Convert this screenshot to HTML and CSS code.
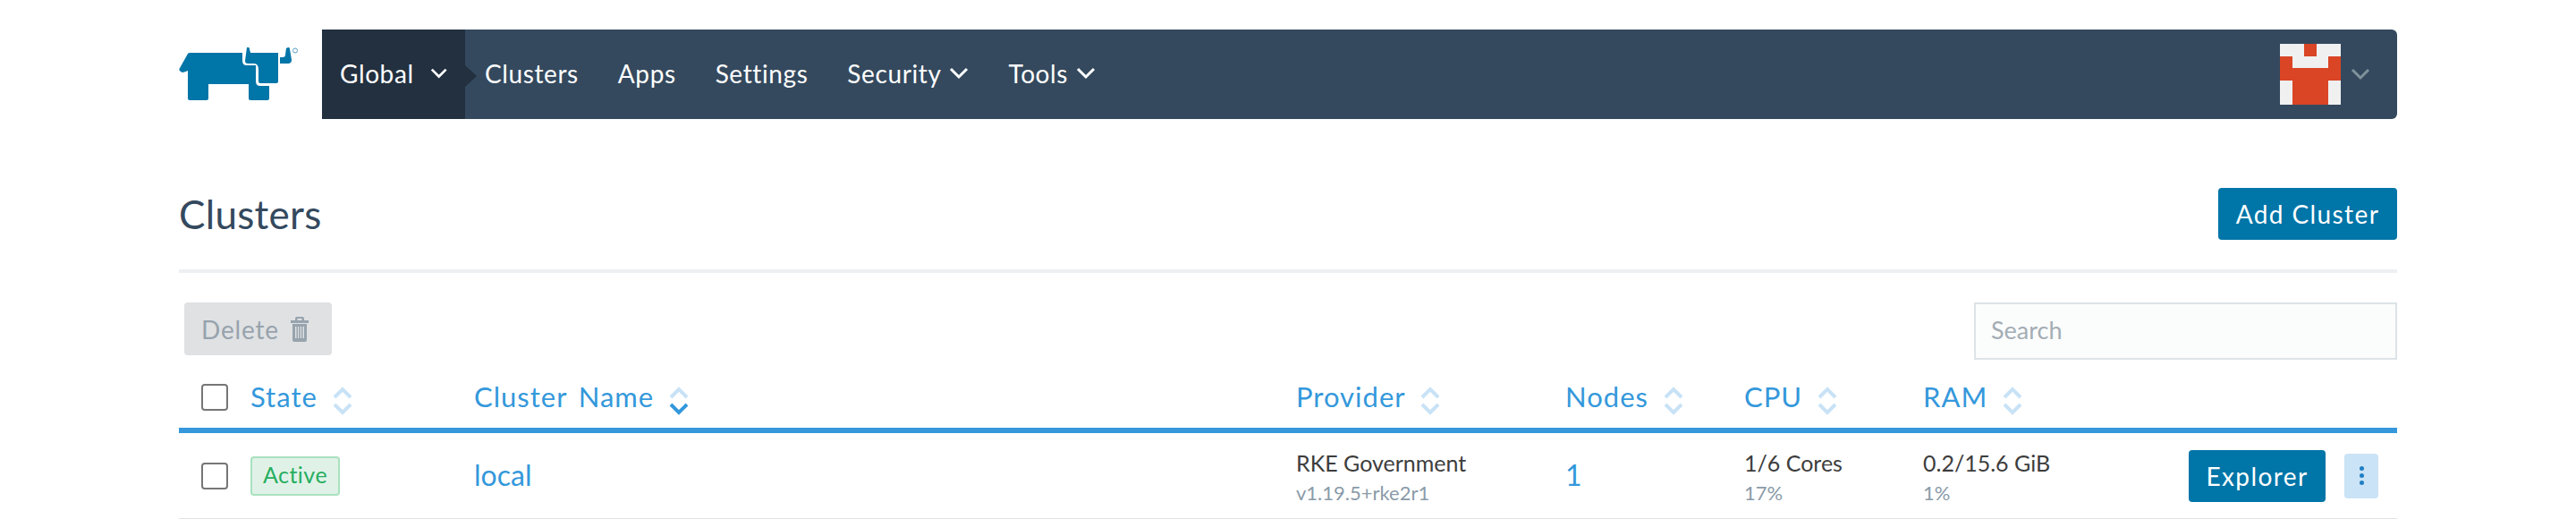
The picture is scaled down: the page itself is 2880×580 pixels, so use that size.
FILE: index.html
```html
<!DOCTYPE html>
<html lang="en">
<head>
  <meta charset="UTF-8" />
  <title>Rancher - Clusters</title>
  <link rel="stylesheet" href="styles.css">
</head>
<body>
  <header class="top">
    <svg class="logo" viewBox="0 0 134 60" width="134" height="60">
      <path fill="#0075a8" d="M12 6H71V15Q71 20 76 20H86V38Q86 43 91 43H101V57Q101 59 99 59H80Q78 59 78 57V41H33V57Q33 59 31 59H12Q10 59 10 57V27Q10 25 8 27L4 28Q-1 26 1 23L10 7Q11 6 12 6Z"/>
      <path fill="#0075a8" d="M76 0H78Q79 0 79 2L80 6H111V38Q111 40 108 40H91Q89 40 89 38V25Q89 18 84 18H77Q74 18 74 15Z"/>
      <path fill="#0075a8" d="M120 1Q121 0 123 0Q124 0 124 2L126 14Q126 18 122 18H113V11H116Q119 11 119 8Z"/>
      <circle cx="130" cy="3.500" r="2.500" fill="none" stroke="#5a9fc4" stroke-width="1"/>
    </svg>
    <nav class="navbar">
      <ul class="menu">
        <li class="menu-item active">Global <svg class="chev" viewBox="0 0 22 14"><path d="M2 2l9 9 9-9"/></svg></li>
        <li class="menu-item">Clusters</li>
        <li class="menu-item">Apps</li>
        <li class="menu-item">Settings</li>
        <li class="menu-item">Security <svg class="chev" viewBox="0 0 22 14"><path d="M2 2l9 9 9-9"/></svg></li>
        <li class="menu-item">Tools <svg class="chev" viewBox="0 0 22 14"><path d="M2 2l9 9 9-9"/></svg></li>
      </ul>
      <div class="user">
        <svg class="avatar" viewBox="0 0 5 5" width="68" height="68" shape-rendering="crispEdges">
          <rect width="5" height="5" fill="#f0f0f0"/>
          <path fill="#d94525" d="M2 0h1v1H2zM0 1h1v1h3V1h1v2H4v2H1V3H0z"/>
        </svg>
        <svg class="chev chev-user" viewBox="0 0 22 14"><path d="M2 2l9 9 9-9"/></svg>
      </div>
    </nav>
  </header>

  <section class="page-head">
    <h1>Clusters</h1>
    <button class="btn btn-primary btn-add">Add Cluster</button>
  </section>

  <section class="toolbar">
    <button class="btn btn-disabled">Delete
      <svg class="trash" viewBox="0 0 20 28" width="20" height="28">
        <path fill="#97a3ad" d="M7 0h6q2 0 2 2v2h5v3H0V4h5V2q0-2 2-2zM7.500 2v2h5V2z"/>
        <path fill="#97a3ad" fill-rule="evenodd" d="M2 8h16v18q0 2-2 2H4q-2 0-2-2zM5 11v13h1.500V11zM8 11v13h1.200V11zM10.800 11v13H12V11zM13.500 11v13H15V11z"/>
      </svg>
    </button>
    <input class="search" type="text" placeholder="Search">
  </section>

  <table class="grid">
    <colgroup>
      <col class="c-check"><col class="c-state"><col class="c-name"><col class="c-prov"><col class="c-nodes"><col class="c-cpu"><col class="c-ram"><col>
    </colgroup>
    <thead>
      <tr>
        <th class="check"><span class="box"></span></th>
        <th>State <svg class="sort" viewBox="0 0 22 32"><path d="M2 12l9-9 9 9"/><path d="M2 20l9 9 9-9"/></svg></th>
        <th>Cluster Name <svg class="sort sorted" viewBox="0 0 22 32"><path d="M2 12l9-9 9 9"/><path class="on" d="M2 20l9 9 9-9"/></svg></th>
        <th>Provider <svg class="sort" viewBox="0 0 22 32"><path d="M2 12l9-9 9 9"/><path d="M2 20l9 9 9-9"/></svg></th>
        <th>Nodes <svg class="sort" viewBox="0 0 22 32"><path d="M2 12l9-9 9 9"/><path d="M2 20l9 9 9-9"/></svg></th>
        <th>CPU <svg class="sort" viewBox="0 0 22 32"><path d="M2 12l9-9 9 9"/><path d="M2 20l9 9 9-9"/></svg></th>
        <th>RAM <svg class="sort" viewBox="0 0 22 32"><path d="M2 12l9-9 9 9"/><path d="M2 20l9 9 9-9"/></svg></th>
        <th></th>
      </tr>
    </thead>
    <tbody>
      <tr>
        <td class="check"><span class="box"></span></td>
        <td><span class="badge">Active</span></td>
        <td class="link">local</td>
        <td><div class="main">RKE Government</div><div class="sub">v1.19.5+rke2r1</div></td>
        <td class="link">1</td>
        <td><div class="main">1/6 Cores</div><div class="sub">17%</div></td>
        <td><div class="main">0.2/15.6 GiB</div><div class="sub">1%</div></td>
        <td>
          <div class="actions">
            <button class="btn btn-primary btn-explorer">Explorer</button>
            <button class="btn btn-more"><span class="dot"></span><span class="dot"></span><span class="dot"></span></button>
          </div>
        </td>
      </tr>
    </tbody>
  </table>
</body>
</html>
```

FILE: styles.css
```css
* {
  box-sizing: border-box;
}
body {
  margin: 0;
  padding: 33px 200px 0;
  background: #fff;
  font-family: Lato, "Open Sans", sans-serif;
  font-size: 25px;
  color: #3d3d3d;
}

.top {
  display: flex;
  align-items: center;
  height: 100px;
}
.logo {
  flex: none;
  margin-right: 26px;
}
.navbar {
  flex: 1;
  display: flex;
  justify-content: space-between;
  height: 100px;
  background: #34495e;
  border-radius: 0 6px 6px 0;
  color: #fff;
}
.menu {
  display: flex;
  margin: 0;
  padding: 0;
  list-style: none;
}
.menu-item {
  display: flex;
  align-items: center;
  gap: 9px;
  padding: 0 22px 2px;
  font-size: 28px;
  letter-spacing: 0.6px;
  white-space: nowrap;
}
.menu-item.active {
  position: relative;
  width: 160px;
  padding: 0 20px 2px;
  gap: 18px;
  background: #22303f;
}
.menu-item.active::after {
  content: "";
  position: absolute;
  top: 40px;
  left: 100%;
  border-style: solid;
  border-width: 12px 0 12px 13px;
  border-color: transparent transparent transparent #22303f;
}
.chev {
  width: 22px;
  height: 14px;
  fill: none;
  stroke: #fff;
  stroke-width: 3;
}
.user {
  display: flex;
  align-items: center;
  gap: 11px;
  padding-right: 30px;
}
.avatar {
  display: block;
}
.chev-user {
  stroke: #7f929b;
}

.page-head {
  display: flex;
  justify-content: space-between;
  align-items: center;
  height: 172px;
  padding-top: 77px;
  padding-bottom: 33px;
  border-bottom: 4px solid #edf0f2;
}
h1 {
  margin: 0;
  font-size: 44px;
  font-weight: 400;
  letter-spacing: 0.3px;
  color: #34495e;
}

.btn {
  border: 0;
  border-radius: 4px;
  font-family: inherit;
  font-size: 28px;
  letter-spacing: 1.4px;
}
.btn-primary {
  background: #0075a8;
  color: #fff;
}
.btn-add {
  width: 200px;
  height: 58px;
}

.toolbar {
  display: flex;
  justify-content: space-between;
  align-items: flex-start;
  padding: 33px 0 0 6px;
}
.btn-disabled {
  display: flex;
  align-items: center;
  gap: 13px;
  width: 165px;
  height: 59px;
  padding: 0 19px;
  background: #dfe1e3;
  color: #97a3ad;
  letter-spacing: 0.8px;
}
.search {
  width: 473px;
  height: 64px;
  padding: 0 17px 3px;
  border: 2px solid #dde3e6;
  background: #fbfcfc;
  font-family: inherit;
  font-size: 27px;
}
.search::placeholder {
  color: #a3adb5;
}

.grid {
  width: 100%;
  margin-top: 12px;
  border-collapse: separate;
  border-spacing: 0;
  table-layout: fixed;
}
.c-check { width: 80px; }
.c-state { width: 250px; }
.c-name { width: 919px; }
.c-prov { width: 301px; }
.c-nodes { width: 200px; }
.c-cpu { width: 200px; }
.c-ram { width: 200px; }

th {
  height: 70px;
  padding: 0 0 4px;
  border-bottom: 6px solid #3498db;
  text-align: left;
  font-size: 31px;
  font-weight: 400;
  letter-spacing: 1px;
  word-spacing: 4px;
  color: #3498db;
  white-space: nowrap;
}
td {
  height: 96px;
  padding: 0;
  border-bottom: 1px solid #dfe1e3;
}
.check {
  padding-left: 25px;
}
.box {
  display: block;
  width: 30px;
  height: 30px;
  border: 2px solid #767676;
  border-radius: 4px;
}
.sort {
  width: 22px;
  height: 32px;
  margin-left: 4px;
  vertical-align: middle;
  fill: none;
  stroke: #c8e2f6;
  stroke-width: 4;
}
.sort .on {
  stroke: #3498db;
}
.badge {
  display: inline-block;
  width: 100px;
  height: 44px;
  border: 2px solid #a9e1bf;
  border-radius: 4px;
  background: #e0f2e8;
  color: #27ae60;
  font-size: 25px;
  line-height: 37px;
  letter-spacing: 0.5px;
  text-align: center;
}
.link {
  padding-bottom: 3px;
  color: #3498db;
  font-size: 32px;
}
.main {
  margin-top: 4px;
  line-height: 34px;
  padding-bottom: 1px;
}
.sub {
  color: #8a9ba8;
  font-size: 22px;
  line-height: 32px;
}
.actions {
  display: flex;
  align-items: center;
  justify-content: flex-end;
  gap: 21px;
  padding-right: 21px;
}
.btn-explorer {
  width: 153px;
  height: 58px;
}
.btn-more {
  display: flex;
  flex-direction: column;
  align-items: center;
  justify-content: center;
  gap: 3px;
  width: 38px;
  height: 50px;
  padding: 0;
  background: #cbe3f6;
}
.dot {
  width: 5px;
  height: 5px;
  border-radius: 50%;
  background: #1f7fc4;
}
```
